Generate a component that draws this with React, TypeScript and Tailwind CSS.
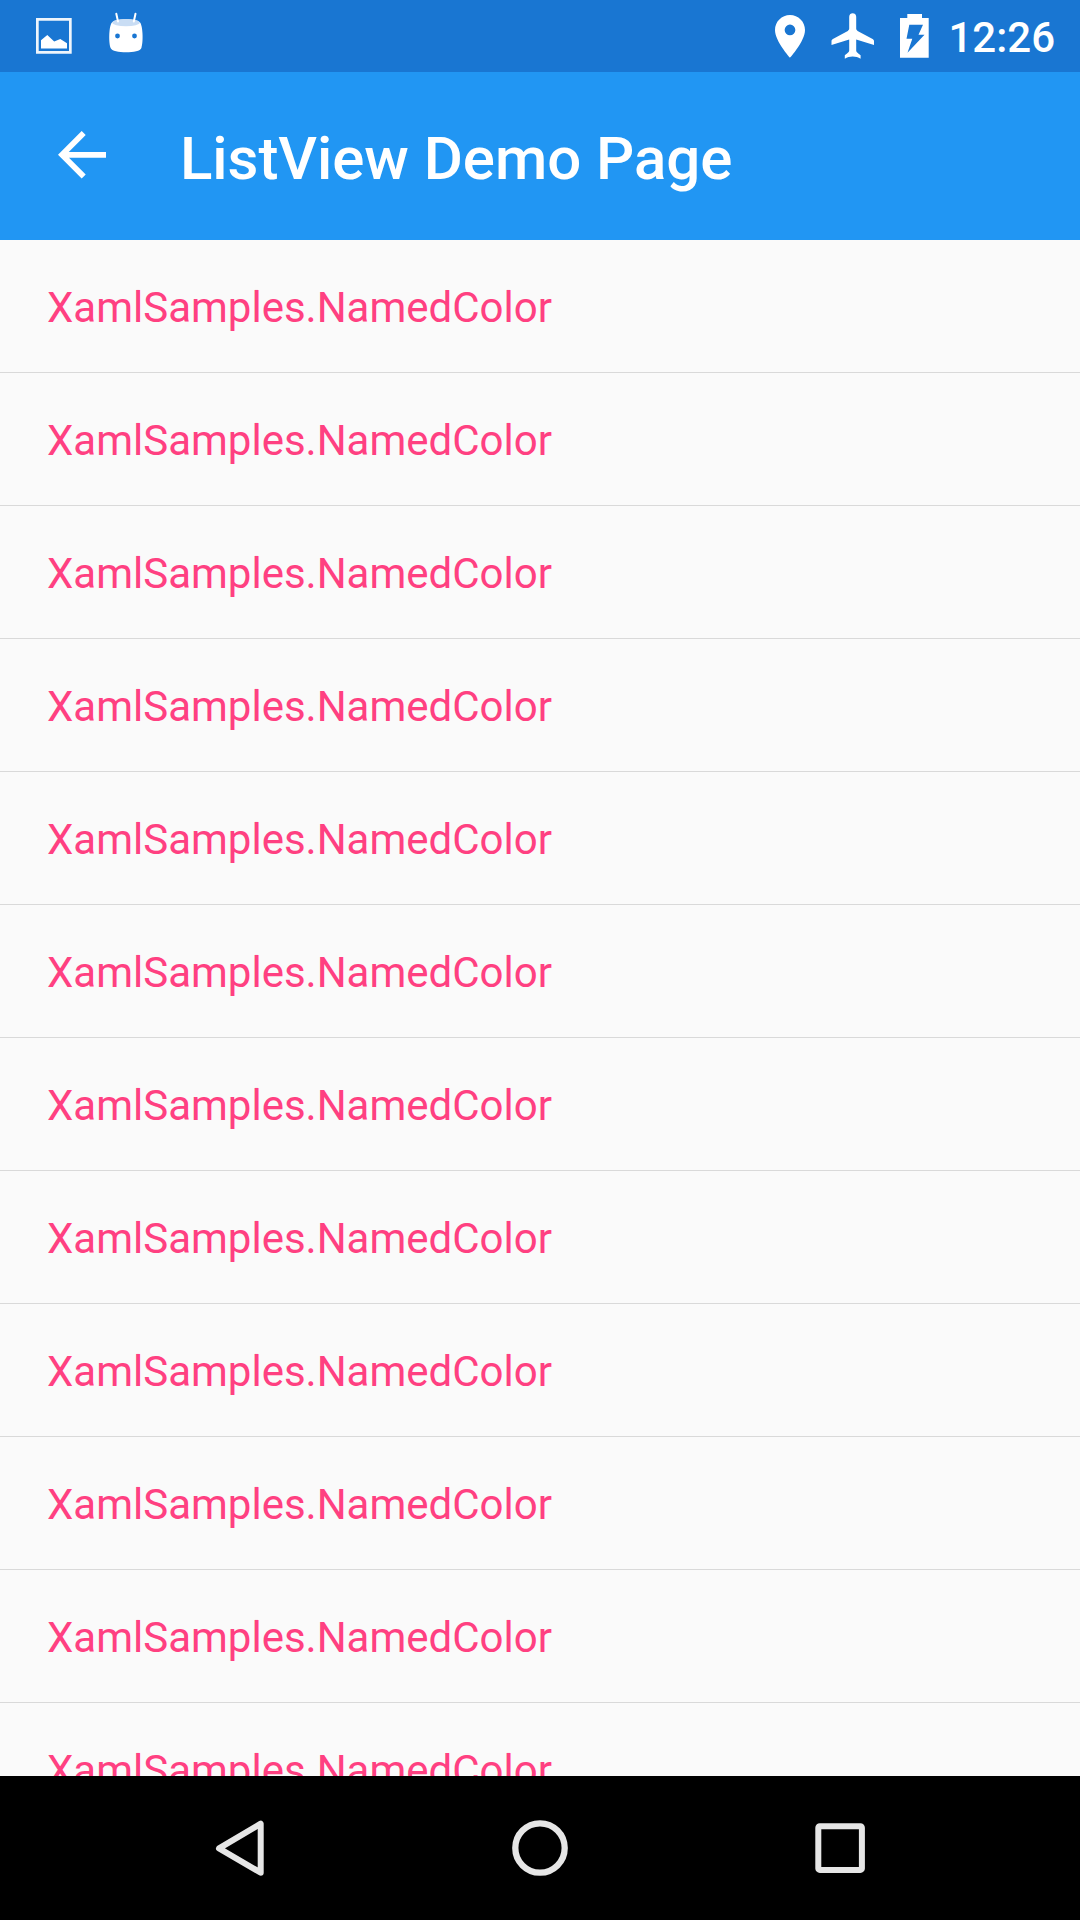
import React from "react";

const items = Array.from({ length: 12 }, () => "XamlSamples.NamedColor");

function ImageIcon() {
  return (
    <svg width="36" height="36" viewBox="0 0 36 36" fill="white">
      <path fillRule="evenodd" d="M0 0H35.7V35.7H0ZM2.7 2.7V33H33V2.7Z" opacity=".93" />
      <path d="M5 30.5V22.2L11.3 17L18.2 23.6L24.3 21L31 25.2V30.5Z" />
    </svg>
  );
}

function RobotIcon() {
  return (
    <svg width="36" height="42" viewBox="0 0 36 42">
      <path
        fillRule="evenodd"
        fill="white"
        d="M4 10.5C9 6.2 27 6.2 32 10.5C34.6 13 35.7 29 33.4 36C31.8 41.8 4.6 41.8 2.6 36C.3 29 1.2 13 4 10.5ZM9.5 21.6A2.4 2.4 0 1 0 9.5 26.4A2.4 2.4 0 1 0 9.5 21.6ZM26.5 21.6A2.4 2.4 0 1 0 26.5 26.4A2.4 2.4 0 1 0 26.5 21.6Z"
      />
      <ellipse cx="18" cy="10.6" rx="13.8" ry="3.7" fill="#c9ddf4" />
      <path d="M8.3 1.8L10 9.5M27.5 1.8L25.8 9.5" stroke="white" strokeWidth="2" strokeLinecap="round" />
    </svg>
  );
}

function PinIcon() {
  return (
    <svg width="30" height="43" viewBox="0 0 30 43" fill="white">
      <path
        fillRule="evenodd"
        d="M15 0C6.7 0 0 6.7 0 15C0 26.2 15 42.8 15 42.8S30 26.2 30 15C30 6.7 23.3 0 15 0ZM15 20.3A5.35 5.35 0 1 1 15 9.6A5.35 5.35 0 1 1 15 20.3Z"
      />
    </svg>
  );
}

function PlaneIcon() {
  return (
    <svg width="44" height="46" viewBox="0 0 44 46" fill="white">
      <path d="M18.2 3.7C18.2 -.9 25.2 -.9 25.2 3.7V15.6C25.2 16.6 25.7 17.3 26.6 17.9L41.6 26.1C42.5 26.6 43 27.3 43 28.3V32L25.2 26.4V37.3C25.2 39 25.8 39.5 29.6 42.2V45.7C27.3 44.5 24.6 43.6 21.7 43.6S16.1 44.5 13.8 45.7V42.2C17.6 39.5 18.2 39 18.2 37.3V26.4L.5 32V28.3C.5 27.3 1 26.6 1.9 26.1L16.8 17.9C17.7 17.3 18.2 16.6 18.2 15.6Z" />
    </svg>
  );
}

function BatteryIcon() {
  return (
    <svg width="29" height="44" viewBox="0 0 29 44">
      <path d="M7.3 0H22V4H28.7V43.7H0V4H7.3Z" fill="white" />
      <path d="M9.3 10.8H23L18.5 20.8H24.5L7.5 38.8L12.3 24.7H6.5Z" fill="#1976d2" />
    </svg>
  );
}

export default function App() {
  return (
    <div className="flex h-[1920px] w-[1080px] flex-col overflow-hidden bg-[#fafafa] font-['Roboto',sans-serif]">
      <div className="flex h-[72px] shrink-0 items-start justify-between bg-[#1976d2] pr-[25px] pl-[36px] text-white">
        <div className="flex items-start gap-[36px]">
          <div className="pt-[18px]"><ImageIcon /></div>
          <div className="pt-[12px]"><RobotIcon /></div>
        </div>
        <div className="flex items-start">
          <div className="pt-[15px]"><PinIcon /></div>
          <div className="ml-[26px] pt-[13px]"><PlaneIcon /></div>
          <div className="ml-[25px] pt-[14px]"><BatteryIcon /></div>
          <span className="ml-[19px] pt-[14px] text-[42px] leading-[48px] font-medium">12:26</span>
        </div>
      </div>

      <header className="flex h-[168px] shrink-0 items-start bg-[#2196f3] pl-[58px] text-white">
        <svg className="mt-[59px]" width="48" height="48" viewBox="0 0 48 48" fill="none" stroke="white" strokeWidth="5.7">
          <path d="M25.7 2L4 23.7L25.7 45.4M4 23.8H48" />
        </svg>
        <h1 className="ml-[74px] pt-[51px] text-[60px] leading-[72px] font-medium tracking-[-0.05px]">ListView Demo Page</h1>
      </header>

      <ul className="h-[1536px] shrink-0 overflow-hidden">
        {items.map((item, i) => (
          <li
            key={i}
            className="flex h-[133px] items-center border-b border-[#d9d9d9] pt-[3px] pl-[47px] text-[42px] leading-[50px] text-[#ff4081]"
          >
            {item}
          </li>
        ))}
      </ul>

      <nav className="flex h-[144px] shrink-0 items-center justify-center gap-[220px] bg-black">
        <svg width="80" height="80" viewBox="0 0 80 80" fill="none" stroke="#e6e6e6" strokeWidth="6" strokeLinejoin="round">
          <path d="M60.7 15.5V64.5L19 40.2Z" transform="translate(0 .2)" />
        </svg>
        <svg width="80" height="80" viewBox="0 0 80 80" fill="none" stroke="#e6e6e6" strokeWidth="6.3">
          <circle cx="40" cy="40" r="24.7" />
        </svg>
        <svg width="80" height="80" viewBox="0 0 80 80" fill="none" stroke="#e6e6e6" strokeWidth="6">
          <rect x="18.3" y="18.3" width="43.6" height="43.6" rx="1.5" />
        </svg>
      </nav>
    </div>
  );
}
